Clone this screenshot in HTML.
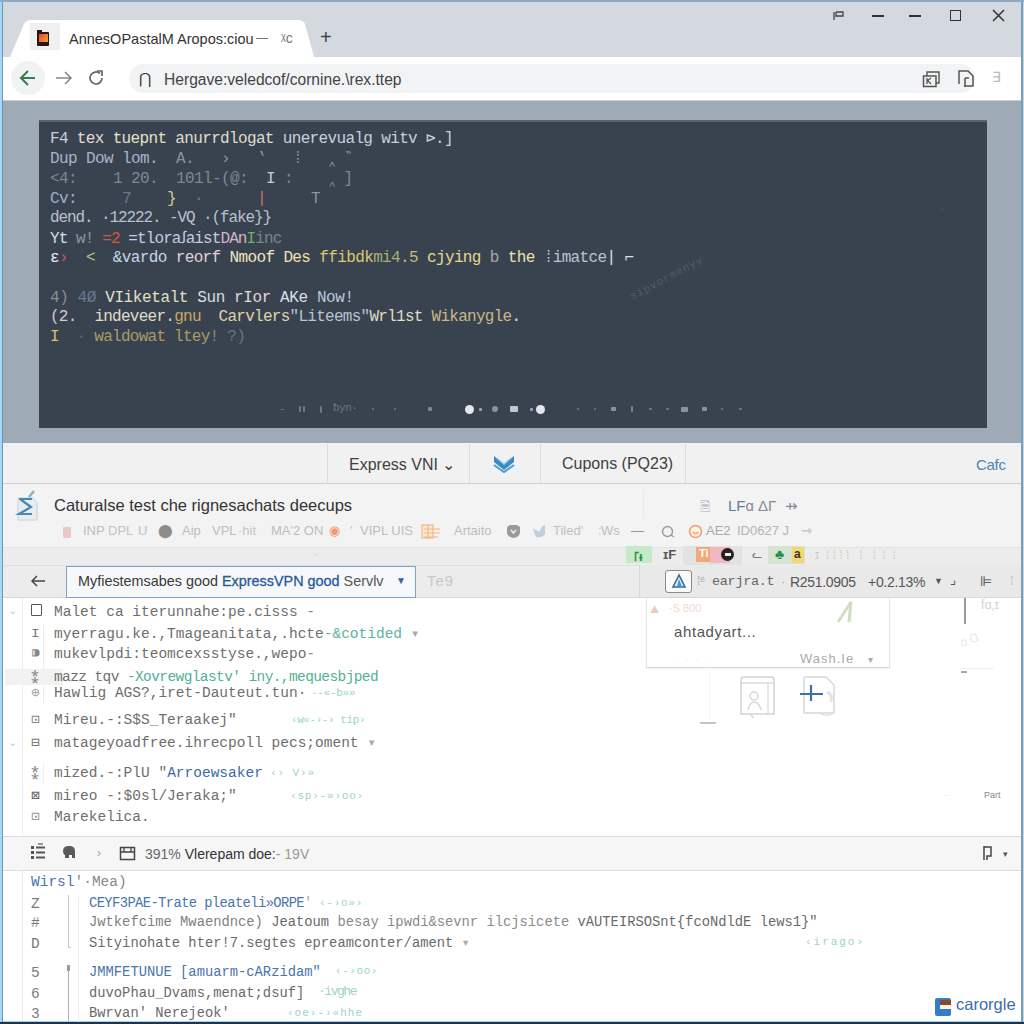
<!DOCTYPE html>
<html><head><meta charset="utf-8">
<style>
*{margin:0;padding:0;box-sizing:border-box}
html,body{width:1024px;height:1024px;overflow:hidden}
body{background:#fff;position:relative;font-family:"Liberation Sans",sans-serif;color:#333}
.a{position:absolute;white-space:pre}
.m{font-family:"Liberation Mono",monospace}
.pl{position:absolute;font-family:"Liberation Mono",monospace;font-size:16px;letter-spacing:-0.6px;line-height:20px;white-space:pre;color:#cfd3d8}
.cl{position:absolute;font-family:"Liberation Mono",monospace;font-size:14.5px;line-height:20px;white-space:pre;color:#6e6e6e}
</style></head><body>
<!-- window frame -->
<div class="a" style="left:0;top:0;width:1024px;height:1024px;background:#9fd3f3"></div>
<div class="a" style="left:3px;top:2px;width:1018px;height:1019px;background:#fff"></div>

<!-- tab strip -->
<div class="a" style="left:3px;top:2px;width:1018px;height:55px;background:#d4d8df;border-top:1px solid #d0dce8"></div>
<svg class="a" style="left:0;top:0" width="1024" height="60">
  <path d="M10 57 L24 24 Q26 20 31 20 L299 20 Q303 20 305 24 L314 57 Z" fill="#fff"/>
</svg>
<div class="a" style="left:30px;top:23px;width:30px;height:27px;background:#f0f0f0"></div>
<div class="a" style="left:37px;top:32px;width:12px;height:14px;background:#2a1510;border-radius:1px"><div class="a" style="left:2px;top:2px;width:9px;height:8px;background:linear-gradient(135deg,#e84a2a,#f0a040)"></div></div><div class="a" style="left:37px;top:30px;width:5px;height:3px;background:#2a1510"></div>
<div class="a" style="left:69px;top:31px;font-size:14.5px;color:#333">AnnesOPastalM Aropos:ciou</div>
<div class="a" style="left:256px;top:38px;width:12px;height:1px;background:#777"></div>
<div class="a" style="left:281px;top:30px;font-size:14px;color:#777">ᵡc</div>
<div class="a" style="left:320px;top:26px;font-size:20px;color:#444">+</div>
<!-- window controls -->
<svg class="a" style="left:832px;top:10px" width="14" height="11"><path d="M2 2V10M4 2V7M4 2H11V6H4" stroke="#444" stroke-width="1.3" fill="none"/></svg>
<div class="a" style="left:872px;top:15px;width:12px;height:1.5px;background:#333"></div>
<div class="a" style="left:909px;top:15px;width:12px;height:1.5px;background:#333"></div>
<div class="a" style="left:950px;top:10px;width:11px;height:11px;border:1.5px solid #333"></div>
<svg class="a" style="left:992px;top:9px" width="13" height="13"><path d="M1 1L12 12M12 1L1 12" stroke="#333" stroke-width="1.5"/></svg>

<!-- toolbar -->
<div class="a" style="left:3px;top:57px;width:1018px;height:44px;background:#fff"></div>
<div class="a" style="left:11px;top:61px;width:34px;height:34px;border-radius:50%;background:#f1f2f3"></div>
<svg class="a" style="left:18px;top:68px" width="20" height="20"><path d="M17 10H3M10 3L3 10L10 17" stroke="#3a7d4c" stroke-width="2" fill="none"/></svg>
<svg class="a" style="left:55px;top:70px" width="18" height="16"><path d="M1 8H16M10 2L16 8L10 14" stroke="#888" stroke-width="1.6" fill="none"/></svg>
<svg class="a" style="left:87px;top:69px" width="18" height="18"><path d="M15 9A6 6 0 1 1 13 4.5" stroke="#666" stroke-width="1.7" fill="none"/><path d="M10 2H15V7" stroke="#666" stroke-width="1.7" fill="none"/></svg>
<div class="a" style="left:129px;top:64px;width:846px;height:29px;border-radius:15px;background:#f1f3f4"></div>
<div class="a" style="left:139px;top:70px;font-size:15px;color:#333">⋂</div>
<div class="a" style="left:164px;top:71px;font-size:15.6px;color:#444">Hergave:veledcof/cornine.\rex.ttep</div>
<svg class="a" style="left:922px;top:69px" width="20" height="19"><path d="M1.5 7H14V17.5H1.5Z" fill="#eef0f2" stroke="#555" stroke-width="1.5"/><path d="M5 7V3H17V14H14" stroke="#555" stroke-width="1.4" fill="none"/><path d="M5 9V15M5 12L9 9M6 12L9 15" stroke="#555" stroke-width="1.3" fill="none"/></svg>
<svg class="a" style="left:957px;top:69px" width="18" height="19"><path d="M2 15V2H11L16 7V17H7" stroke="#555" stroke-width="1.5" fill="none"/><path d="M8 9V18M8 9H12" stroke="#555" stroke-width="1.5" fill="none"/></svg>
<div class="a" style="left:992px;top:69px;font-size:14px;color:#bbb">∃</div>
<div class="a" style="left:3px;top:100px;width:1018px;height:1px;background:#c8ccd0"></div>

<!-- gray surround + dark panel -->
<div class="a" style="left:3px;top:101px;width:1018px;height:342px;background:#9eaab5"></div>
<div class="a" style="left:39px;top:120px;width:948px;height:308px;background:#38434f;border-top:2px solid #56616c"></div>
<div class="pl" style="left:50px;top:129px;color:#c8d0dc;letter-spacing:-0.65px">F4 <span style="color:#e6dcd8">tex</span> <span style="color:#e8e0c8">tuepnt</span> <span style="color:#e0dcd0">anurrdlogat</span> unerevualg witv ⊳.]</div>
<div class="pl" style="left:50px;top:149px;color:#a8b4cc">Dup Dow lom.  <span style="color:#8894a4">A.   ›   ‛   ⁞   ‸ ‶</span></div>
<div class="pl" style="left:50px;top:169px;color:#7e8894">&lt;4:    1 20.  101l-(@:  <span style="color:#c8ccd4">I</span> :    ‸ ]</div>
<div class="pl" style="left:50px;top:189px;color:#6a7684"><span style="color:#a0b0cc">Cv:</span>     7    <span style="color:#d8c890">}</span>  ·      <span style="color:#d07060">|</span>     <span style="color:#8a96a4">T</span></div>
<div class="pl" style="left:50px;top:208px;color:#b8c0d0;letter-spacing:-1.1px">dend. ·12222. -VQ ·(fake}}</div>
<div class="pl" style="left:50px;top:229px;color:#8a94a2;letter-spacing:-0.9px"><span style="color:#d8dce4">Yt</span> <span style="color:#8894a8">w!</span> <span style="color:#d05a40">=2</span> <span style="color:#c4cce0">=tloraꭍaist</span><span style="color:#d4b4c8">DAn</span><span style="color:#70b070">I</span><span style="color:#7a8490">inc</span></div>
<div class="pl" style="left:50px;top:248px;color:#e0d8b0;letter-spacing:-0.63px"><span style="color:#e8e8ec">ɛ</span><span style="color:#c06060">›</span>  <span style="color:#c8c080">&lt;</span>  <span style="color:#c8d4e8">&amp;vardo</span> <span style="color:#e8d0d8">reorf</span> <span style="color:#f0e6c0">Nmoof</span> <span style="color:#f0e0b0">Des</span> <span style="color:#d8c870">ffibdk</span><span style="color:#a8b070">mi4</span><span style="color:#c8b880">.5</span> <span style="color:#e8d890">cjying</span> <span style="color:#a8a8a8">b</span> <span style="color:#ece0b0">the</span> <span style="color:#b8c4d4">⁞imatce</span><span style="color:#e0e0e0">|</span> <span style="color:#e0e0e0">⌐</span></div>
<div class="pl" style="left:50px;top:288px;color:#d0d6dc;letter-spacing:-0.4px"><span style="color:#8a8f9a">4)</span> <span style="color:#6a7a94">4Ø</span> <span style="color:#e4e0c8">VIiketalt</span> <span style="color:#d8dce0">Sun</span> <span style="color:#e0d8dc">rIor</span> <span style="color:#d8e0ec">AKe</span> <span style="color:#b8c8dc">Now!</span></div>
<div class="pl" style="left:50px;top:307px;color:#d8d4c0;letter-spacing:-0.73px"><span style="color:#d8c8d0">(2.</span>  <span style="color:#e0dcc8">indeveer.</span><span style="color:#c8a860">gnu</span>  <span style="color:#e0d4a8">Carvlers</span><span style="color:#b8c4d4">"Liteems"</span><span style="color:#e0dcc8">Wrl1st</span> <span style="color:#c8b888">Wikanygle</span><span style="color:#e0e0e0">.</span></div>
<div class="pl" style="left:50px;top:327px;color:#a89c68;letter-spacing:-0.74px"><span style="color:#d8c070">I</span>  <span style="color:#5a6470">·</span> waldowat ltey<span style="color:#8a8a70">!</span> <span style="color:#6a7480">?)</span></div>
<div class="a" style="left:281px;top:409px;width:3px;height:1px;background:#6f7a86;border-radius:1px"></div>
<div class="a" style="left:299px;top:406px;width:2px;height:6px;background:#6f7a86;border-radius:1px"></div>
<div class="a" style="left:303px;top:406px;width:2px;height:6px;background:#6f7a86;border-radius:1px"></div>
<div class="a" style="left:320px;top:406px;width:2px;height:7px;background:#6f7a86;border-radius:1px"></div>
<div class="a m" style="left:333px;top:402px;font-size:11px;color:#6a7581;letter-spacing:-0.5px">ᵬyn·</div>
<div class="a" style="left:372px;top:408px;width:2px;height:2px;background:#6f7a86;border-radius:1px"></div>
<div class="a" style="left:394px;top:408px;width:2px;height:2px;background:#6f7a86;border-radius:1px"></div>
<div class="a" style="left:428px;top:407px;width:4px;height:4px;background:#7a8591;border-radius:1px"></div>
<div class="a" style="left:465px;top:405px;width:9px;height:9px;background:#e4e8ec;border-radius:50%"></div>
<div class="a" style="left:479px;top:408px;width:3px;height:3px;background:#9aa4ae;border-radius:1px"></div>
<div class="a" style="left:492px;top:406px;width:6px;height:6px;background:#8a949e;border-radius:50%"></div>
<div class="a" style="left:510px;top:406px;width:8px;height:6px;background:#c0c6cc;border-radius:1px"></div>
<div class="a" style="left:530px;top:408px;width:3px;height:3px;background:#9aa4ae;border-radius:1px"></div>
<div class="a" style="left:536px;top:405px;width:9px;height:9px;background:#e4e8ec;border-radius:50%"></div>
<div class="a" style="left:577px;top:408px;width:2px;height:2px;background:#6f7a86;border-radius:1px"></div>
<div class="a" style="left:594px;top:408px;width:2px;height:2px;background:#6f7a86;border-radius:1px"></div>
<div class="a" style="left:611px;top:407px;width:5px;height:4px;background:#8a949e;border-radius:1px"></div>
<div class="a" style="left:631px;top:406px;width:2px;height:6px;background:#7a8591;border-radius:1px"></div>
<div class="a" style="left:649px;top:408px;width:3px;height:2px;background:#6f7a86;border-radius:1px"></div>
<div class="a" style="left:666px;top:408px;width:3px;height:2px;background:#6f7a86;border-radius:1px"></div>
<div class="a" style="left:681px;top:407px;width:7px;height:5px;background:#8a949e;border-radius:1px"></div>
<div class="a" style="left:702px;top:407px;width:5px;height:4px;background:#8a949e;border-radius:1px"></div>
<div class="a" style="left:721px;top:408px;width:2px;height:2px;background:#6f7a86;border-radius:1px"></div>
<div class="a" style="left:739px;top:408px;width:3px;height:2px;background:#6f7a86;border-radius:1px"></div>

<div class="a m" style="left:628px;top:292px;font-size:11px;color:#505b67;transform:rotate(-28deg);transform-origin:0 0;letter-spacing:0.8px">sipvormenyy</div>
<div class="a m" style="left:940px;top:205px;font-size:9px;color:#48535f;transform:rotate(-27deg)">‹</div>
<!-- tab bar -->
<div class="a" style="left:3px;top:443px;width:1018px;height:41px;background:#f1f1f1"></div>
<div class="a" style="left:327px;top:444px;width:1px;height:39px;background:#dcdcdc"></div>
<div class="a" style="left:469px;top:444px;width:1px;height:39px;background:#dcdcdc"></div>
<div class="a" style="left:540px;top:444px;width:1px;height:39px;background:#dcdcdc"></div>
<div class="a" style="left:685px;top:444px;width:1px;height:39px;background:#dcdcdc"></div>
<div class="a" style="left:349px;top:455px;font-size:16px;color:#404040">Express VNI ⌄</div>
<svg class="a" style="left:493px;top:455px" width="22" height="18"><path d="M1 1L11 9L21 1V7L11 15L1 7Z" fill="#3a8ac4"/><path d="M4 3L11 9L18 3" stroke="#a8d0ec" stroke-width="1.5" fill="none"/><path d="M1 10L11 17L21 10" stroke="#4a9ad4" stroke-width="2" fill="none"/></svg>
<div class="a" style="left:562px;top:455px;font-size:16px;color:#404040">Cupons (PQ23)</div>
<div class="a" style="left:976px;top:456px;font-size:15px;color:#4a85b0;letter-spacing:-0.3px">Cafc</div>
<div class="a" style="left:3px;top:483px;width:1018px;height:1px;background:#d0d0d0"></div>

<!-- title section -->
<div class="a" style="left:3px;top:484px;width:1018px;height:63px;background:#f3f3f3"></div>
<svg class="a" style="left:14px;top:490px" width="26" height="32"><path d="M4 8H19L23 13V30H4Z" fill="#e8edf2" stroke="#c8d0d8"/><path d="M5 9H18M6 9L17 17L5 24H18" stroke="#4a88b4" stroke-width="2.2" fill="none"/><path d="M15 7L20 1" stroke="#8ab0c8" stroke-width="2.5"/></svg>
<div class="a" style="left:54px;top:496px;font-size:16.5px;color:#333">Caturalse test che rignesachats deecups</div>
<div class="a" style="left:700px;top:497px;font-size:13px;color:#aab">🗎</div>
<div class="a" style="left:728px;top:497px;font-size:15px;color:#5a7da5">LF<span style="color:#889">ɑ ΔГ  ⇸</span></div>
<div class="a" style="left:63px;top:527px;width:8px;height:11px;background:#ecc8c4;border-radius:1px"></div>
<div class="a" style="left:83px;top:523px;font-size:13px;color:#bdbdbd">INP</div>
<div class="a" style="left:108px;top:523px;font-size:13px;color:#c4c4c4">DPL</div>
<div class="a" style="left:138px;top:523px;font-size:13px;color:#c0c0c0">U</div>
<div class="a" style="left:158px;top:523px;font-size:13px;color:#8c8c8c">⬤</div>
<div class="a" style="left:182px;top:523px;font-size:13px;color:#bdbdbd">Aip</div>
<div class="a" style="left:212px;top:523px;font-size:13px;color:#bdbdbd">VPL</div>
<div class="a" style="left:238px;top:523px;font-size:13px;color:#c4c4c4">·hit</div>
<div class="a" style="left:271px;top:523px;font-size:13px;color:#bdbdbd">MA'2 ON</div>
<div class="a" style="left:329px;top:523px;font-size:13px;color:#f09868">◉</div>
<div class="a" style="left:350px;top:523px;font-size:13px;color:#c8c8c8">'</div>
<div class="a" style="left:360px;top:523px;font-size:13px;color:#bdbdbd">VIPL UIS</div>
<svg class="a" style="left:421px;top:524px" width="20" height="16"><rect x="1" y="1" width="11" height="13" fill="#fbe8d4" stroke="#f0b880" stroke-width="1.2"/><path d="M3 5H19M3 9H19M3 13H17M7 1V14" stroke="#f0b880" stroke-width="1.2"/></svg>
<div class="a" style="left:454px;top:523px;font-size:13px;color:#bdbdbd">Artaito</div>
<svg class="a" style="left:506px;top:524px" width="15" height="15"><path d="M1 3L4 1H11L14 3V8Q14 13 7.5 14Q1 13 1 8Z" fill="#9a9a9a"/><path d="M5 6L7.5 9L10 6" stroke="#eee" stroke-width="1.5" fill="none"/></svg>
<svg class="a" style="left:532px;top:524px" width="14" height="15"><path d="M1 4Q5 8 8 7Q9 2 13 1V10Q10 14 4 13Q2 10 1 4Z" fill="#bcd0e2"/></svg>
<div class="a" style="left:553px;top:523px;font-size:13px;color:#c0c0c0">Tiled'</div>
<div class="a" style="left:598px;top:523px;font-size:13px;color:#ccc">:</div>
<div class="a" style="left:601px;top:523px;font-size:13px;color:#bdbdbd">Ws</div>
<div class="a" style="left:631px;top:523px;font-size:13px;color:#999">—</div>
<svg class="a" style="left:661px;top:525px" width="15" height="14"><circle cx="6.5" cy="6.5" r="5" fill="none" stroke="#9a9a9a" stroke-width="1.4"/><path d="M10 10L13 12" stroke="#9a9a9a" stroke-width="1.4"/></svg>
<svg class="a" style="left:688px;top:524px" width="15" height="15"><circle cx="7.5" cy="7.5" r="6" fill="#fdf0e4" stroke="#f0a070" stroke-width="1.6"/><path d="M4.5 8Q7.5 11 10.5 8" stroke="#f0a070" stroke-width="1.3" fill="none"/></svg>
<div class="a" style="left:706px;top:523px;font-size:13px;color:#aaa">AE2</div>
<div class="a" style="left:737px;top:523px;font-size:13px;color:#b4b4b4">ID0627 J</div>
<div class="a" style="left:801px;top:523px;font-size:13px;color:#aaa">⇾</div>
<div class="a" style="left:3px;top:547px;width:1018px;height:1px;background:#e2e2e2"></div>
<div class="a" style="left:643px;top:490px;width:1px;height:28px;background:#e8e8e8"></div>
<div class="a" style="left:3px;top:548px;width:1018px;height:17px;background:#ececec"></div>
<div class="a" style="left:626px;top:546px;width:26px;height:17px;background:#c4ebc8"></div>
<div class="a" style="left:634px;top:547px;font-size:13px;font-weight:bold;color:#2e8a4a">꜒ᵼ</div>
<div class="a" style="left:663px;top:547px;font-size:13px;font-weight:bold;color:#555">ɪF</div>
<div class="a" style="left:683px;top:546px;width:59px;height:19px;background:#e2e2e2"></div>
<div class="a" style="left:710px;top:547px;width:20px;height:16px;background:#f0b8c0"></div>
<div class="a" style="left:696px;top:547px;width:14px;height:15px;background:#f4a878"></div>
<div class="a" style="left:699px;top:547px;font-size:11px;font-weight:bold;color:#fff">Ti</div>
<div class="a" style="left:721px;top:548px;width:13px;height:13px;border-radius:50%;background:#2a2020"></div>
<div class="a" style="left:725px;top:553px;width:6px;height:3px;background:#eee"></div>
<div class="a" style="left:752px;top:547px;font-size:12px;color:#777">ᓚ</div>
<div class="a" style="left:768px;top:546px;width:37px;height:18px;background:#d6e4d4"></div>
<div class="a" style="left:792px;top:547px;width:12px;height:16px;background:#f2d870"></div>
<div class="a" style="left:775px;top:546px;font-size:14px;color:#2a8a4a">♣</div>
<div class="a" style="left:794px;top:547px;font-size:12px;font-weight:bold;color:#333">a</div>
<div class="a" style="left:815px;top:548px;font-size:12px;color:#ccb">ɪ  ⁞ ⁞ ⁞ ⁞   ⁞   ⁞  ⁞  ⁞</div>
<div class="a" style="left:314px;top:549px;font-size:10px;color:#bbb">·</div>

<!-- search/input toolbar -->
<div class="a" style="left:3px;top:565px;width:1018px;height:33px;background:#ececec;border-top:1px solid #dedede"></div>
<div class="a" style="left:639px;top:565px;width:382px;height:33px;background:#e9e9e9;border-left:1px solid #d8d8d8"></div>
<div class="a" style="left:3px;top:597px;width:1018px;height:1px;background:#d8d8d8"></div>
<svg class="a" style="left:30px;top:574px" width="16" height="14"><path d="M15 7H2M7 2L2 7L7 12" stroke="#444" stroke-width="1.5" fill="none"/></svg>
<div class="a" style="left:66px;top:566px;width:350px;height:32px;background:#f6f8fa;border:1.5px solid #7aa4d0"></div>
<div class="a" style="left:78px;top:573px;font-size:14.4px;color:#3a3a3a">Myfiestemsabes good <span style="color:#2a5a9a;-webkit-text-stroke:0.3px #2a5a9a">ExpressVPN good</span> <span style="color:#555">Servlv</span></div>
<div class="a" style="left:396px;top:575px;font-size:10px;color:#2f66a8">▼</div>
<div class="a" style="left:427px;top:572px;font-size:15px;color:#c8c8c8;letter-spacing:1px">Te9</div>
<div class="a" style="left:665px;top:570px;width:27px;height:23px;background:#fafafa;border:1px solid #8a8a8a;border-radius:3px"></div>
<svg class="a" style="left:671px;top:573px" width="16" height="17"><path d="M8 2L2 14H14Z" fill="#d8e8f4" stroke="#3a6a9a" stroke-width="1.6"/><path d="M8 6L11 14H6Z" fill="#4a90d0"/></svg>
<div class="a" style="left:697px;top:574px;font-size:12px;color:#aaa">⁞ᵉ</div>
<div class="a m" style="left:712px;top:574px;font-size:13.5px;color:#666;letter-spacing:-0.3px">earjra.t</div>
<div class="a" style="left:781px;top:574px;font-size:13px;color:#aaa">·</div>
<div class="a" style="left:790px;top:574px;font-size:14px;color:#555;letter-spacing:-0.3px">R251.0905</div>
<div class="a" style="left:868px;top:574px;font-size:14px;color:#555;letter-spacing:-0.3px">+0.2.13%</div>
<div class="a" style="left:934px;top:576px;font-size:9px;color:#555">▼</div>
<div class="a" style="left:950px;top:572px;font-size:13px;color:#555">⌟</div>
<div class="a" style="left:980px;top:573px;font-size:14px;color:#444">⊫</div>
<div class="a" style="left:1010px;top:573px;font-size:13px;color:#bbb">⁞</div>

<!-- code list -->
<div class="a" style="left:22px;top:598px;width:1px;height:237px;background:#ececec"></div>
<div class="a" style="left:43px;top:625px;width:1px;height:78px;background:#ececec"></div><div class="a" style="left:43px;top:762px;width:1px;height:22px;background:#f0f0f0"></div>
<div class="a" style="left:5px;top:669px;width:58px;height:16px;background:#f2f2f2"></div>
<div class="a" style="left:8px;top:604px;font-size:11px;color:#ccc">⌄</div>
<div class="a" style="left:8px;top:736px;font-size:11px;color:#ccc">⌄</div>
<div class="a" style="left:31px;top:604px;width:11px;height:12px;border:1.5px solid #555;border-radius:1px"></div>
<div class="cl" style="left:31px;top:623px;color:#777">ɪ</div>
<div class="cl" style="left:31px;top:643px;color:#888">⁍</div>
<div class="cl" style="left:31px;top:667px;color:#888">⁑</div>
<div class="cl" style="left:31px;top:683px;color:#aaa">⊕</div>
<div class="cl" style="left:31px;top:710px;color:#888">⊡</div>
<div class="cl" style="left:31px;top:733px;color:#777">⊟</div>
<div class="cl" style="left:31px;top:763px;color:#888">⁑</div>
<div class="cl" style="left:31px;top:786px;color:#666">⊠</div>
<div class="cl" style="left:31px;top:807px;color:#999">⊡</div>
<div class="cl" style="left:54px;top:602px">Malet ca iterunnahe:pe.cisss <span style="color:#888">-</span></div>
<div class="cl" style="left:54px;top:624px">myerragu.ke.,Tmageanitata,.hcte<span style="color:#5ab49c">-&amp;cotided</span> <span style="color:#aaa">▾</span></div>
<div class="cl" style="left:54px;top:644px">mukevlpdi:teomcexsstyse.,wepo<span style="color:#888">-</span></div>
<div class="cl" style="left:54px;top:667px;letter-spacing:-0.6px">mazz tqv <span style="color:#52b096">-Xovrewglastv' iny.,mequesbjped</span></div>
<div class="cl" style="left:54px;top:683px">Hawlig AGS?,iret-Dauteut.tun·</div>
<div class="cl" style="left:54px;top:710px">Mireu.-:S$S_Teraakej"</div>
<div class="cl" style="left:54px;top:733px">matageyoadfree.ihrecpoll pecs;oment <span style="color:#aaa">▾</span></div>
<div class="cl" style="left:54px;top:763px">mized.-:PlU "<span style="color:#3a6aa8">Arroewsaker</span></div>
<div class="cl" style="left:54px;top:786px">mireo -:$0sl/Jeraka;"</div>
<div class="cl" style="left:54px;top:807px">Marekelica.</div>

<!-- right popup -->
<div class="a" style="left:646px;top:598px;width:244px;height:70px;background:#fff;border:1px solid #e4e4e4;border-top:none;border-bottom:1.5px solid #d8d8d8;box-shadow:0 1px 2px rgba(0,0,0,0.06)"></div>
<div class="a" style="left:650px;top:603px;font-size:11px;color:#f0c8c0">⛰</div>
<div class="a" style="left:669px;top:602px;font-size:11px;color:#f4d8d0">·S 800</div>
<svg class="a" style="left:835px;top:600px" width="20" height="24"><path d="M3 22L16 2L14 22" stroke="#cfe0c0" stroke-width="3" fill="none"/></svg>
<div class="a" style="left:674px;top:623px;font-size:15px;color:#555;letter-spacing:0.6px">ahtadyart...</div>
<div class="a" style="left:676px;top:653px;font-size:11px;color:#eee">.  ·  ·  ·</div>
<div class="a" style="left:800px;top:651px;font-size:13px;color:#aaa;letter-spacing:1px">Wash.Ie   <span style="font-size:10px">▾</span></div>
<div class="a" style="left:964px;top:598px;width:1.5px;height:26px;background:#999"></div>
<div class="a" style="left:981px;top:599px;font-size:13px;color:#d4d4d4;transform:rotate(180deg)">ɪ'ɒɟ</div>
<div class="a" style="left:960px;top:633px;font-size:12px;color:#e8e8e8;transform:rotate(-20deg)">ɑ Ɑ</div>
<div class="a" style="left:960px;top:668px;width:34px;height:1px;background:#f0f0f0"></div>
<div class="a" style="left:961px;top:671px;width:6px;height:2px;background:#aaa"></div>
<div class="a" style="left:709px;top:668px;width:1px;height:56px;background:#f4f4f4"></div>
<svg class="a" style="left:738px;top:674px" width="40" height="44"><path d="M3 6Q3 3 6 3H33Q36 3 36 6V40H3Z" fill="none" stroke="#d4d4d4" stroke-width="1.5"/><path d="M3 9H36M30 9V40" stroke="#dcdcdc" stroke-width="1.3"/><circle cx="16" cy="22" r="4" fill="none" stroke="#d8d8d8" stroke-width="1.5"/><path d="M10 36Q12 28 16 28Q21 28 23 36M12 40L16 44" stroke="#d8d8d8" stroke-width="1.5" fill="none"/></svg>
<svg class="a" style="left:801px;top:674px" width="40" height="46"><path d="M3 4Q3 3 5 3H25L33 11V39H3Z" fill="none" stroke="#d8d8d8" stroke-width="1.5"/><path d="M26 18Q32 20 30 28" stroke="#e4e4e4" stroke-width="3" fill="none"/><path d="M20 40Q30 44 34 36" stroke="#e0e0e0" stroke-width="1.5" fill="none"/></svg>
<svg class="a" style="left:798px;top:683px" width="28" height="20"><path d="M2 11H25M13 2V18" stroke="#3f6fa8" stroke-width="2.2"/></svg>
<div class="a" style="left:700px;top:722px;width:16px;height:2px;background:#c4c4c4"></div>
<div class="a" style="left:984px;top:790px;font-size:9px;color:#888">Part</div>
<div class="a" style="left:944px;top:790px;font-size:9px;color:#ddd">··</div>

<!-- status bar -->
<div class="a" style="left:3px;top:836px;width:1018px;height:1px;background:#dadada"></div>
<div class="a" style="left:3px;top:837px;width:1018px;height:33px;background:#f6f6f6"></div>
<div class="a" style="left:3px;top:870px;width:1018px;height:1px;background:#dcdcdc"></div>
<svg class="a" style="left:30px;top:843px" width="16" height="18"><rect x="1" y="3" width="3" height="3" fill="#555"/><rect x="1" y="8" width="3" height="3" fill="#555"/><rect x="1" y="13" width="3" height="3" fill="#555"/><path d="M6 4.5H15M6 9.5H15M6 14.5H15" stroke="#555" stroke-width="1.8"/><path d="M8 1H13" stroke="#777" stroke-width="1.5"/></svg>
<svg class="a" style="left:61px;top:845px" width="16" height="15"><path d="M2 6Q2 1 8 1Q14 1 14 6V13H11V10H8V13H4V10Q2 9 2 6Z" fill="#5a5a5a"/></svg>
<div class="a" style="left:97px;top:846px;font-size:12px;color:#aaa">›</div>
<svg class="a" style="left:119px;top:846px" width="17" height="15"><rect x="1.5" y="1.5" width="14" height="12" fill="none" stroke="#444" stroke-width="1.5"/><path d="M1 6H16M5 1V6M12 1V6" stroke="#444" stroke-width="1.3"/></svg>
<div class="a" style="left:145px;top:846px;font-size:14px;color:#333"><span style="color:#666">391%</span> Vlerepam doe:<span style="color:#999">- 19V</span></div>
<svg class="a" style="left:982px;top:845px" width="12" height="16"><path d="M2 1V15M2 2H9V11H5V15" stroke="#444" stroke-width="1.5" fill="none"/></svg>
<div class="a" style="left:1003px;top:849px;font-size:9px;color:#555">▾</div>

<!-- bottom code -->
<div class="a" style="left:22px;top:871px;width:1px;height:150px;background:#e8e8e8"></div>
<div class="a" style="left:68px;top:895px;width:1px;height:53px;background:#c8c8c8"></div>
<div class="a" style="left:68px;top:947px;width:3px;height:1px;background:#ccc"></div>
<div class="a" style="left:68px;top:966px;width:1px;height:55px;background:#b0b0b0"></div>
<div class="a" style="left:67px;top:965px;width:3px;height:6px;background:#999"></div>
<div class="a" style="left:78px;top:895px;width:1px;height:127px;background:#ececec"></div>
<div class="cl" style="left:31px;top:872px;color:#6a6a6a"><span style="color:#4a74ae">Wirsl</span><span style="color:#888">'·Mea)</span></div>
<div class="cl" style="left:31px;top:894px;color:#7a7a7a">Z</div>
<div class="cl" style="left:31px;top:913px;color:#7a7a7a">#</div>
<div class="cl" style="left:31px;top:934px;color:#7a7a7a">D</div>
<div class="cl" style="left:31px;top:963px;color:#7a7a7a">5</div>
<div class="cl" style="left:31px;top:984px;color:#7a7a7a">6</div>
<div class="cl" style="left:31px;top:1004px;color:#7a7a7a">3</div>
<div class="cl" style="font-size:13.8px;left:89px;top:894px;color:#4a74ae;letter-spacing:-0.6px">CEYF3PAE-Trate pleateli»ORPE<span style="color:#aaa">'</span></div>
<div class="cl" style="font-size:13.8px;left:89px;top:913px;color:#6a6a6a"><span style="color:#808080">Jwtkefcime Mwaendnce)</span> Jeatoum <span style="color:#8a8a8a">besay ipwdi&amp;sevnr ilcjsicete</span> vAUTEIRSOSnt{fcoNdldE lews1}"</div>
<div class="cl" style="font-size:13.8px;left:89px;top:934px;color:#6a6a6a">Sityinohate hter!7.segtes epreamconter/ament <span style="color:#aaa">▾</span></div>

<div class="cl" style="font-size:13.8px;left:89px;top:963px;color:#4a74ae">JMMFETUNUE [amuarm-cARzidam"</div>
<div class="cl" style="font-size:13.8px;left:89px;top:984px;color:#6a6a6a">duvoPhau_Dvams,menat;dsuf]</div>
<div class="cl" style="font-size:13.8px;left:89px;top:1004px;color:#6a6a6a">Bwrvan' Nerejeok'</div>
<div class="a m" style="left:311px;top:686px;font-size:11px;line-height:14px;letter-spacing:-0.31px;color:#9cd4c4">·-«-b»»</div>
<div class="a m" style="left:291px;top:713px;font-size:11px;line-height:14px;letter-spacing:-0.43px;color:#9cd4c4">‹w«-›-› tip›</div>
<div class="a m" style="left:270px;top:766px;font-size:11px;line-height:14px;letter-spacing:0.90px;color:#9cd4c4">‹› V›»</div>
<div class="a m" style="left:290px;top:789px;font-size:11px;line-height:14px;letter-spacing:0.80px;color:#9cd4c4">‹sp›-»›oo›</div>
<div class="a m" style="left:319px;top:896px;font-size:11px;line-height:14px;letter-spacing:0.73px;color:#9cd4c4">‹-›o»›</div>
<div class="a m" style="left:805px;top:935px;font-size:11px;line-height:14px;letter-spacing:1.97px;color:#9cd4c4">‹irago›</div>
<div class="a m" style="left:335px;top:964px;font-size:11px;line-height:14px;letter-spacing:0.57px;color:#9cd4c4">‹-›oo›</div>
<div class="a m" style="left:318px;top:985px;font-size:13px;line-height:14px;letter-spacing:-1.47px;color:#9cd4c4">·ivghe</div>
<div class="a m" style="left:287px;top:1006px;font-size:11px;line-height:14px;letter-spacing:1.00px;color:#9cd4c4">‹oe›-›«hhe</div>
<!-- logo -->
<svg class="a" style="left:934px;top:997px" width="20" height="20"><rect x="1" y="1" width="16" height="18" rx="2" fill="#3080c8"/><rect x="6" y="3" width="11" height="5" fill="#8a4a2a"/><rect x="6" y="8" width="11" height="4" fill="#f4f4f4"/><rect x="6" y="12" width="11" height="4" fill="#3a7ac0"/></svg>
<div class="a" style="left:956px;top:995px;font-size:16.5px;color:#3d6ea8">carorgle</div>

<!-- frame bottom/right lines -->
<div class="a" style="left:0;top:0;width:2px;height:1024px;background:#a3d8f6"></div>
<div class="a" style="left:2px;top:0;width:1px;height:1024px;background:#6f98b0"></div>
<div class="a" style="left:1021px;top:0;width:2px;height:1024px;background:#809cb2"></div>
<div class="a" style="left:1023px;top:0;width:1px;height:1024px;background:#b0dcf6"></div>
<div class="a" style="left:0;top:1022px;width:1024px;height:2px;background:#1c3452"></div>
<div class="a" style="left:0;top:0;width:1024px;height:2px;background:#8cabc2"></div>
</body></html>
